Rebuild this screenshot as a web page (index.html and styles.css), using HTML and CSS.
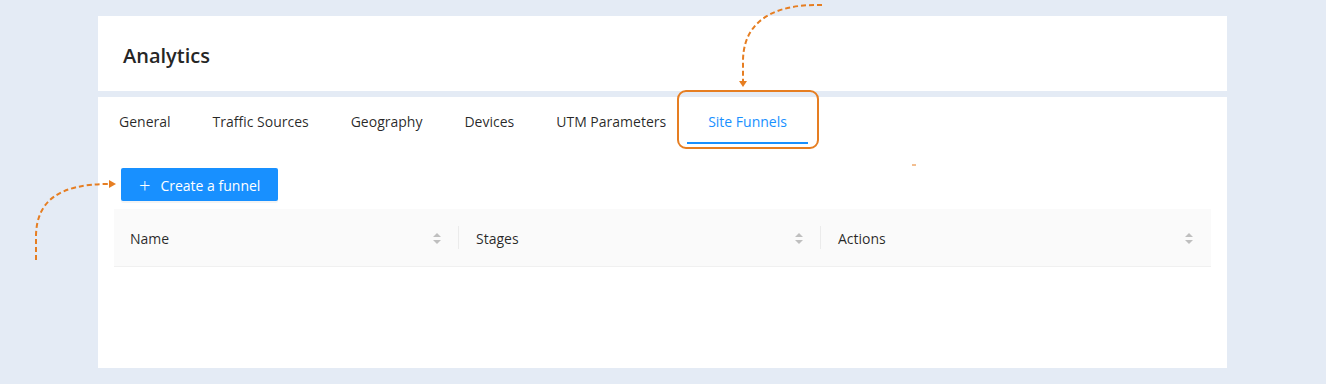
FILE: index.html
```html
<!DOCTYPE html>
<html lang="en">
<head>
    <meta charset="UTF-8" />
    <meta name="viewport" content="width=device-width, initial-scale=1.0"/>
    <title>Analytics</title>
    <link rel="stylesheet" href="styles.css">
</head>
<body>

    <div class="page">
        <!-- Page header -->
        <div class="card header">
            <h1>Analytics</h1>
        </div>

        <!-- Tabs + funnels table -->
        <div class="card content">
            <div class="tabs">
                <div class="tab">General</div>
                <div class="tab">Traffic Sources</div>
                <div class="tab">Geography</div>
                <div class="tab">Devices</div>
                <div class="tab">UTM Parameters</div>
                <div class="tab active">Site Funnels</div>
            </div>

            <div class="toolbar">
                <button class="btn-primary"><span class="plus">+</span>Create a funnel</button>
            </div>

            <div class="table">
                <div class="th">Name<span class="sorter"></span></div>
                <div class="th">Stages<span class="sorter"></span></div>
                <div class="th">Actions<span class="sorter"></span></div>
            </div>
        </div>
    </div>

    <!-- Annotation layer: arrows and highlight -->
    <svg class="annotations" width="1326" height="384" viewBox="0 0 1326 384">
        <rect x="678" y="91" width="140" height="57" rx="8" ry="8" fill="none" stroke="#e67e22" stroke-width="2"/>
        <path d="M822 5 C 785 4, 744 14, 743 60 L 743 82" fill="none" stroke="#e67e22" stroke-width="2" stroke-dasharray="5 3"/>
        <path d="M739 81 L747 81 L743 87 Z" fill="#e67e22"/>
        <path d="M36 260 L 36 235 C 37 200, 60 184, 109 184" fill="none" stroke="#e67e22" stroke-width="2" stroke-dasharray="5 3"/>
        <path d="M109 180 L109 188 L116 184 Z" fill="#e67e22"/>
        <line x1="912" y1="165" x2="916" y2="165" stroke="#e67e22" stroke-width="1"/>
    </svg>

</body>
</html>
```

FILE: styles.css
```css
:root {
    --bg: #e4ebf5;
    --text: rgba(0, 0, 0, 0.85);
    --primary: #1890ff;
    --border: #f0f0f0;
}

* {
    box-sizing: border-box;
}

body {
    margin: 0;
    background: var(--bg);
    font-family: "Open Sans", "Noto Sans", sans-serif;
    color: var(--text);
    font-size: 14px;
}

.page {
    width: 1129px;
    margin: 16px 0 0 98px;
    display: flex;
    flex-direction: column;
    gap: 6px;
}

.card {
    background: #fff;
}

/* Header card */
.header {
    height: 75px;
    padding: 4px 25px 0;
    display: flex;
    align-items: center;
}

.header h1 {
    margin: 0;
    font-size: 20px;
    font-weight: 600;
    color: #262626;
}

/* Content card */
.content {
    height: 271px;
    padding: 0 16px;
}

.tabs {
    display: flex;
    margin: 0 -16px;
}

.tab {
    padding: 14px 21px 11px;
    line-height: 22px;
    color: var(--text);
    white-space: nowrap;
}

.tab.active {
    color: var(--primary);
    padding-bottom: 9px;
    border-bottom: 2px solid var(--primary);
}

.toolbar {
    padding: 24px 0 8px 7px;
}

.btn-primary {
    height: 33px;
    padding: 1px 18px 0 18px;
    border: none;
    border-radius: 2px;
    background: var(--primary);
    color: #fff;
    font-family: inherit;
    font-size: 14px;
    display: flex;
    align-items: center;
    box-shadow: 0 2px 0 rgba(0, 0, 0, 0.045);
}

.plus {
    font-size: 20px;
    font-weight: 300;
    margin-right: 10px;
    line-height: 1;
    position: relative;
    top: 1px;
}

/* Table header */
.table {
    display: grid;
    grid-template-columns: 344px 362px 1fr;
    background: #fafafa;
    border-bottom: 1px solid var(--border);
}

.th {
    position: relative;
    height: 57px;
    padding: 1px 17px 0 16px;
    display: flex;
    align-items: center;
    justify-content: space-between;
    color: var(--text);
}

.th + .th {
    padding-left: 18px;
}

.th:last-child {
    padding-right: 18px;
}

.th + .th::before {
    content: "";
    position: absolute;
    left: 0;
    top: 17px;
    height: 23px;
    width: 1px;
    background: rgba(0, 0, 0, 0.06);
}

.sorter {
    width: 8px;
    height: 11px;
    position: relative;
}

.sorter::before,
.sorter::after {
    content: "";
    position: absolute;
    left: 0;
    border-left: 4px solid transparent;
    border-right: 4px solid transparent;
}

.sorter::before {
    top: 0;
    border-bottom: 4px solid #bfbfbf;
}

.sorter::after {
    bottom: 0;
    border-top: 4px solid #bfbfbf;
}

/* Overlay annotations */
.annotations {
    position: absolute;
    left: 0;
    top: 0;
    pointer-events: none;
}
```
